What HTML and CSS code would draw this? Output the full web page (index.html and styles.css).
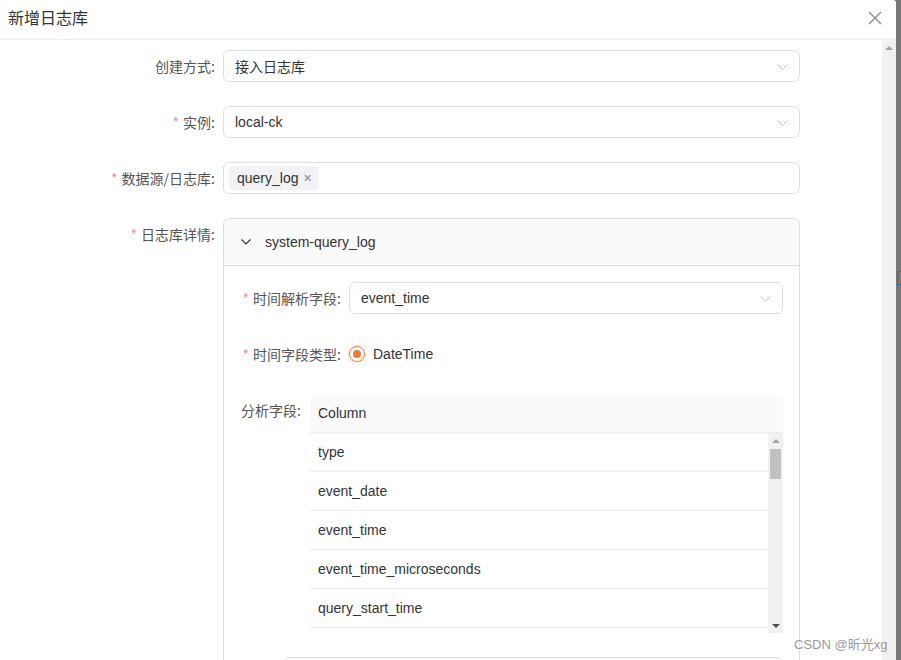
FILE: index.html
```html
<!DOCTYPE html>
<html lang="zh">
<head>
<meta charset="utf-8">
<title>新增日志库</title>
<link rel="stylesheet" href="styles.css">
</head>
<body>
<span class="behind"></span>
<div class="dialog">
  <div class="dialog-header">
    <span class="dialog-title">新增日志库</span>
    <svg class="close" width="14" height="14" viewBox="0 0 14 14"><path d="M1 1L13 13M13 1L1 13" stroke="#8c8c8c" stroke-width="1.4" fill="none"/></svg>
  </div>
  <div class="dialog-body">
    <div class="content">
      <div class="form-row">
        <label class="label">创建方式:</label>
        <div class="select"><span>接入日志库</span><svg class="arrow" width="11" height="6" viewBox="0 0 11 6"><path d="M0.5 0.5L5.5 5.5L10.5 0.5" stroke="#c0c4cc" fill="none"/></svg></div>
      </div>
      <div class="form-row">
        <label class="label"><i class="req">*</i>实例:</label>
        <div class="select"><span>local-ck</span><svg class="arrow" width="11" height="6" viewBox="0 0 11 6"><path d="M0.5 0.5L5.5 5.5L10.5 0.5" stroke="#c0c4cc" fill="none"/></svg></div>
      </div>
      <div class="form-row">
        <label class="label"><i class="req">*</i>数据源/日志库:</label>
        <div class="select tags"><span class="tag">query_log<span class="tag-x">×</span></span></div>
      </div>
      <div class="form-row">
        <label class="label"><i class="req">*</i>日志库详情:</label>
        <div class="collapse">
          <div class="collapse-head">
            <svg class="chev" width="10" height="6" viewBox="0 0 10 6"><path d="M0.5 0.5L5 5L9.5 0.5" stroke="#333" stroke-width="1.2" fill="none"/></svg>
            <span>system-query_log</span>
          </div>
          <div class="collapse-body">
            <div class="form-row inner">
              <label class="label ilabel"><i class="req">*</i>时间解析字段:</label>
              <div class="select"><span>event_time</span><svg class="arrow" width="11" height="6" viewBox="0 0 11 6"><path d="M0.5 0.5L5.5 5.5L10.5 0.5" stroke="#c0c4cc" fill="none"/></svg></div>
            </div>
            <div class="form-row inner">
              <label class="label ilabel"><i class="req">*</i>时间字段类型:</label>
              <div class="radio-group"><span class="radio"><span class="dot"></span></span><span>DateTime</span></div>
            </div>
            <div class="form-row inner">
              <label class="label alabel">分析字段:</label>
              <div class="table">
                <div class="thead">Column</div>
                <div class="tbody">
                  <div class="rows">
                    <div class="tr">type</div>
                    <div class="tr">event_date</div>
                    <div class="tr">event_time</div>
                    <div class="tr">event_time_microseconds</div>
                    <div class="tr">query_start_time</div>
                    <div class="tr tr-empty"></div>
                  </div>
                  <div class="sbar">
                    <span class="sb-btn"><span class="tri-up"></span></span>
                    <span class="sb-track"><span class="sb-thumb"></span></span>
                    <span class="sb-btn"><span class="tri-down"></span></span>
                  </div>
                </div>
              </div>
            </div>
            <div class="form-row inner">
              <label class="label blabel"></label>
              <div class="select"></div>
            </div>
          </div>
        </div>
      </div>
    </div>
    <div class="vscroll"><span class="up"></span></div>
  </div>
</div>
<div class="watermark">CSDN @昕光xg</div>
</body>
</html>
```

FILE: styles.css
```css
html, body {
  margin: 0;
  padding: 0;
}
body {
  width: 901px;
  height: 660px;
  overflow: hidden;
  background: #777777;
  font-family: "Liberation Sans", Arial, "Noto Sans CJK SC", sans-serif;
  font-size: 14px;
  color: #333;
  position: relative;
}
.behind {
  position: absolute;
  left: 897px;
  top: 271px;
  width: 6px;
  height: 14px;
  box-sizing: border-box;
  border: 1px solid #3b6aa8;
  border-right: none;
}
.dialog {
  width: 896px;
  height: 660px;
  background: #fff;
  border-radius: 0 3px 0 0;
  display: flex;
  flex-direction: column;
  position: relative;
}
.dialog-header {
  height: 39px;
  border-bottom: 1px solid #ebeef5;
  display: flex;
  align-items: center;
  justify-content: space-between;
  padding: 0 14px 0 8px;
  flex: none;
}
.dialog-title {
  font-size: 16px;
  color: #333;
  font-family: "Noto Sans CJK SC", sans-serif;
  margin-top: -5px;
}
.close {
  margin-top: -3px;
}
.dialog-body {
  flex: 1;
  display: flex;
  overflow: hidden;
}
.content {
  flex: 1;
  padding-top: 10px;
  overflow: hidden;
}
.vscroll {
  width: 14px;
  background: #f1f1f1;
  flex: none;
  display: flex;
  justify-content: center;
}
.up {
  margin-top: 6px;
  width: 0;
  height: 0;
  border-left: 4px solid transparent;
  border-right: 4px solid transparent;
  border-bottom: 4px solid #a3a3a3;
}
.form-row {
  display: flex;
  align-items: flex-start;
  margin-bottom: 24px;
}
.label {
  width: 215px;
  height: 32px;
  margin-right: 8px;
  text-align: right;
  line-height: 32px;
  color: #555;
  font-family: "Noto Sans CJK SC", sans-serif;
  font-size: 14px;
  flex: none;
  white-space: nowrap;
}
.req {
  font-style: normal;
  color: #f78989;
  margin-right: 4px;
}
.select {
  width: 577px;
  height: 32px;
  box-sizing: border-box;
  border: 1px solid #dcdfe6;
  border-radius: 6px;
  display: flex;
  align-items: center;
  justify-content: space-between;
  padding: 0 11px;
  color: #333;
}
.arrow {
  margin-top: 1px;
}
.tags {
  padding-left: 5px;
  justify-content: flex-start;
}
.tag {
  background: #f0f2f5;
  border-radius: 4px;
  height: 24px;
  line-height: 24px;
  padding: 0 7px 0 8px;
  color: #333;
  display: inline-flex;
  align-items: center;
}
.tag-x {
  color: #888;
  margin-left: 5px;
  font-size: 14px;
}
.collapse {
  width: 577px;
  box-sizing: border-box;
  border: 1px solid #dcdfe6;
  border-radius: 6px 6px 0 0;
  border-bottom: none;
}
.collapse-head {
  height: 46px;
  background: #fafafa;
  border-bottom: 1px solid #dcdfe6;
  border-radius: 6px 6px 0 0;
  display: flex;
  align-items: center;
  padding-left: 17px;
  font-size: 14px;
  color: #333;
}
.chev {
  margin-right: 14px;
}
.collapse-body {
  padding: 16px 16px 0 16px;
}
.inner .select {
  width: auto;
  flex: 1;
}
.ilabel {
  width: 101px;
}
.alabel {
  width: 61px;
  margin-right: 9px;
}
.blabel {
  width: 35px;
}
.radio-group {
  height: 32px;
  display: flex;
  align-items: center;
  color: #333;
}
.radio {
  width: 16px;
  height: 16px;
  box-sizing: border-box;
  border: 1px solid #f07a3a;
  border-radius: 50%;
  display: flex;
  align-items: center;
  justify-content: center;
  margin-right: 8px;
  box-shadow: 0 0 0 2px rgba(240, 122, 58, 0.12);
}
.dot {
  width: 8px;
  height: 8px;
  border-radius: 50%;
  background: #f07a3a;
}
.table {
  flex: 1;
}
.thead {
  height: 38px;
  line-height: 38px;
  background: #fafafa;
  border-bottom: 1px solid #ededed;
  border-radius: 8px 8px 0 0;
  padding-left: 8px;
  color: #333;
}
.tbody {
  height: 200px;
  display: flex;
  overflow: hidden;
}
.rows {
  flex: 1;
  overflow: hidden;
}
.tr {
  height: 38px;
  line-height: 38px;
  border-bottom: 1px solid #ededed;
  padding-left: 8px;
  color: #333;
}
.tr-empty {
  height: 5px;
  border-bottom: none;
}
.sbar {
  width: 15px;
  background: #f1f1f1;
  display: flex;
  flex-direction: column;
  flex: none;
}
.sb-btn {
  height: 15px;
  display: flex;
  align-items: center;
  justify-content: center;
  flex: none;
}
.tri-up {
  width: 0;
  height: 0;
  border-left: 4px solid transparent;
  border-right: 4px solid transparent;
  border-bottom: 4px solid #a3a3a3;
}
.tri-down {
  width: 0;
  height: 0;
  border-left: 4px solid transparent;
  border-right: 4px solid transparent;
  border-top: 4px solid #505050;
}
.sb-track {
  flex: 1;
  padding: 1px 2px 0 2px;
}
.sb-thumb {
  display: block;
  height: 30px;
  background: #c1c1c1;
}
.watermark {
  position: absolute;
  left: 794px;
  top: 634px;
  font-size: 13px;
  color: #999;
  font-family: "Liberation Sans", "Noto Sans CJK SC", sans-serif;
}
```
